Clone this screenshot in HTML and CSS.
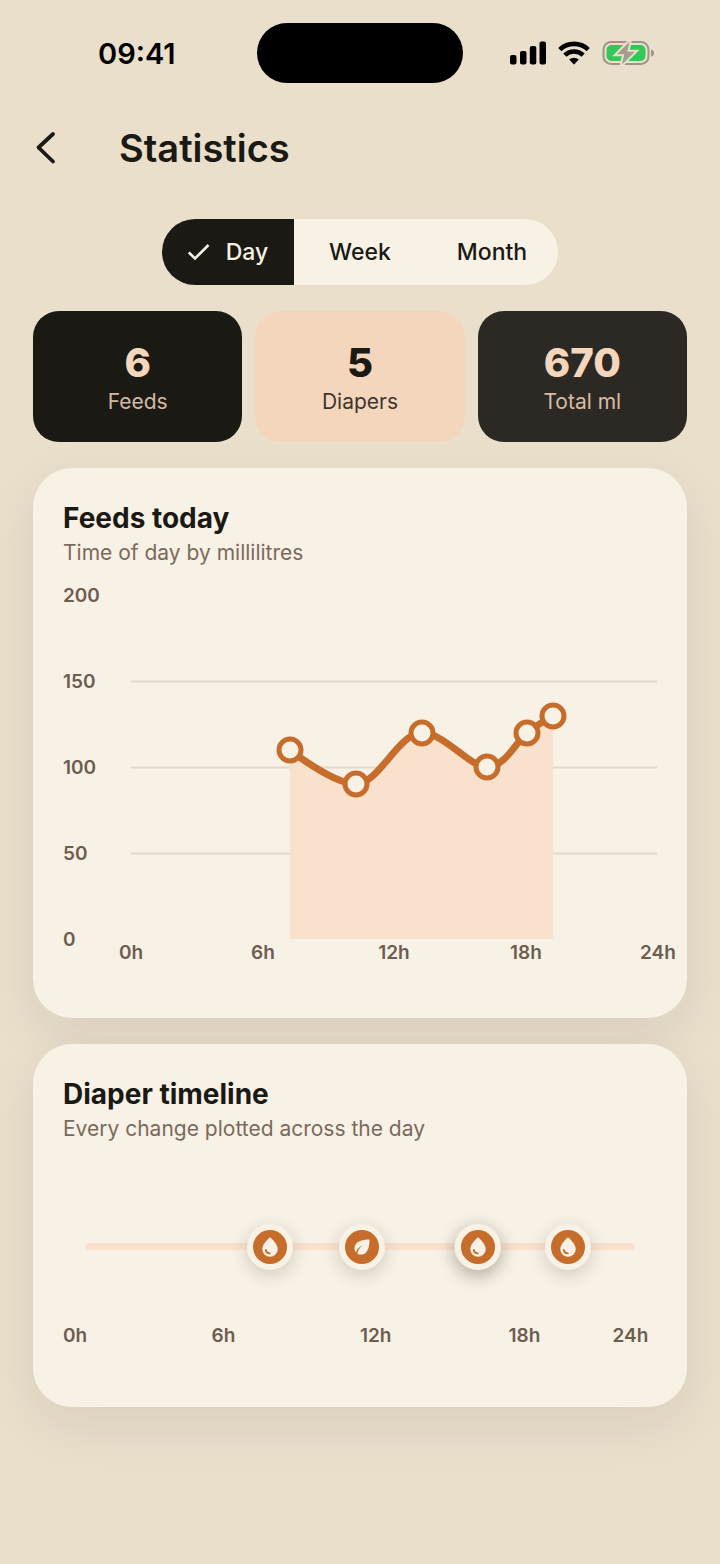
FILE: index.html
```html
<!DOCTYPE html>
<html lang="en">
<head>
  <meta charset="UTF-8">
  <meta name="viewport" content="width=device-width, initial-scale=1.0">
  <title>Statistics</title>

  <link rel="stylesheet" href="styles.css">
</head>
<body>

  <div class="status-bar">
    <time class="status-bar__time">09:41</time>
    <div class="status-bar__island"></div>
    <div class="status-bar__icons">
      <svg width="36" height="24" viewBox="0 0 36 24" aria-hidden="true">
        <rect x="0" y="14" width="6.500" height="9.500" rx="2"/>
        <rect x="10" y="10" width="6.500" height="13.500" rx="2"/>
        <rect x="19.800" y="5" width="6.500" height="18.500" rx="2"/>
        <rect x="29.500" y="0.500" width="6.500" height="23" rx="2"/>
      </svg>
      <svg width="32" height="24" viewBox="0 0 32 24" aria-hidden="true">
        <g fill="none" stroke="#000" stroke-width="4.600">
          <path d="M1.800 8.600A20.500 20.500 0 0 1 30.200 8.600"/>
          <path d="M6.800 14.200A13.400 13.400 0 0 1 25.200 14.200"/>
        </g>
        <path d="M11.200 18.600a7 7 0 0 1 9.600 0l-4.200 4.500q-.6.6-1.200 0z"/>
      </svg>
      <svg width="52" height="26" viewBox="0 0 52 26" aria-hidden="true">
        <rect x="1.500" y="2" width="45" height="22" rx="7.500" fill="none" stroke="#9d9587" stroke-width="2"/>
        <rect x="4.500" y="5" width="39" height="16" rx="5" fill="#34c759"/>
        <path d="M49 9.500q3 .8 3 3.500t-3 3.500z" fill="#9d9587"/>
        <path class="bolt" d="M27.500 1.500 15 14.200h7.200L20 24.500 32.800 11.800h-7.300z"/>
      </svg>
    </div>
  </div>

  <header class="header">
    <button type="button" class="header__back" aria-label="Back">
      <svg width="28" height="34" viewBox="0 0 28 34" aria-hidden="true">
        <path d="M20 3 5.500 16.500l14.500 14" fill="none" stroke="currentColor" stroke-width="3.800" stroke-linecap="round" stroke-linejoin="round"/>
      </svg>
    </button>
    <h1 class="header__title">Statistics</h1>
  </header>

  <main class="main">

    <form class="periods">
      <label for="period-day" class="periods__item">
        <input type="radio" id="period-day" name="period" value="day" checked>
        <svg class="periods__check" width="22" height="18" viewBox="0 0 22 18" aria-hidden="true">
          <path d="M.800 9.500 7 15.500 20.500 2" fill="none" stroke="currentColor" stroke-width="2.600"/>
        </svg>
        <span>Day</span>
      </label>
      <label for="period-week" class="periods__item">
        <input type="radio" id="period-week" name="period" value="week">
        <span>Week</span>
      </label>
      <label for="period-month" class="periods__item">
        <input type="radio" id="period-month" name="period" value="month">
        <span>Month</span>
      </label>
    </form>

    <section class="totals">
      <div class="total total_dark">
        <span class="total__value">6</span>
        <span class="total__name">Feeds</span>
      </div>
      <div class="total total_peach">
        <span class="total__value">5</span>
        <span class="total__name">Diapers</span>
      </div>
      <div class="total total_soft">
        <span class="total__value">670</span>
        <span class="total__name">Total ml</span>
      </div>
    </section>

    <section class="card">
      <h2 class="card__title">Feeds today</h2>
      <p class="card__text">Time of day by millilitres</p>

      <svg class="chart" viewBox="0 0 594 381" role="img" aria-label="Feeds today">
        <g class="chart__grid">
          <path d="M68 96.500H594M68 182.500H594M68 268.500H594"/>
        </g>
        <path class="chart__area" d="M227 165C227 165 270 199 293 199C316 199 335 148 359 148C382 148 406 182 424 182C442 182 453 157 464 148C475 139 490 131 490 131V354H227Z"/>
        <path class="chart__line" d="M227 165C227 165 270 199 293 199C316 199 335 148 359 148C382 148 406 182 424 182C442 182 453 157 464 148C475 139 490 131 490 131"/>
        <g class="chart__points">
          <circle cx="227" cy="165" r="11"/>
          <circle cx="293" cy="199" r="11"/>
          <circle cx="359" cy="148" r="11"/>
          <circle cx="424" cy="182" r="11"/>
          <circle cx="464" cy="148" r="11"/>
          <circle cx="490" cy="131" r="11"/>
        </g>
        <g class="chart__labels">
          <text x="0" y="17">200</text>
          <text x="0" y="103">150</text>
          <text x="0" y="189">100</text>
          <text x="0" y="275">50</text>
          <text x="0" y="361">0</text>
        </g>
        <g class="chart__labels chart__labels_hours">
          <text x="68" y="374">0h</text>
          <text x="200" y="374">6h</text>
          <text x="331" y="374">12h</text>
          <text x="463" y="374">18h</text>
          <text x="595" y="374">24h</text>
        </g>
      </svg>
    </section>

    <section class="card">
      <h2 class="card__title">Diaper timeline</h2>
      <p class="card__text">Every change plotted across the day</p>

      <svg class="sprite" aria-hidden="true">
        <symbol id="drop" viewBox="0 0 34 34">
          <path d="M17 7.300C14 10 9.300 14.500 9.300 19.200a7.700 7.500 0 0 0 15.400 0C24.700 14.500 20 10 17 7.300z" fill="#f8f1e5"/>
          <path d="M12.800 20q.6 3.200 4 3.400" fill="none" stroke="#c66d2c" stroke-width="1.800" stroke-linecap="round"/>
        </symbol>
        <symbol id="leaf" viewBox="0 0 34 34">
          <path d="M24.500 9.500C17 9.500 9.500 11.500 9.500 18.500c0 1.700.6 3 1.400 4 1-3.200 3.300-5.900 6.800-7.500-2.800 2.400-4.700 5.100-5.300 8.700 1 .6 2.300.9 3.700.9 7 0 8.400-8.600 8.400-15.100z" fill="#f8f1e5"/>
        </symbol>
      </svg>

      <div class="timeline">
        <div class="timeline__track">
          <span class="marker" style="left: 33.700%"><svg class="marker__icon"><use href="#drop"/></svg></span>
          <span class="marker" style="left: 50.300%"><svg class="marker__icon"><use href="#leaf"/></svg></span>
          <span class="marker" style="left: 71.300%"><svg class="marker__icon"><use href="#drop"/></svg></span>
          <span class="marker" style="left: 71.500%"><svg class="marker__icon"><use href="#drop"/></svg></span>
          <span class="marker" style="left: 87.900%"><svg class="marker__icon"><use href="#drop"/></svg></span>
        </div>
      </div>

      <div class="hours">
        <span>0h</span>
        <span>6h</span>
        <span>12h</span>
        <span>18h</span>
        <span>24h</span>
      </div>
    </section>

  </main>

</body>
</html>
```
FILE: styles.css
```css
*, *:after, *:before {
  box-sizing: border-box;
}

body {
  margin: 0;
  min-height: 100vh;
  background-color: #e9dfcb;
  color: #1a1914;
  font-family: Inter, "Liberation Sans", sans-serif;
}

.status-bar {
  display: grid;
  grid-template-columns: 1fr 206px 1fr;
  align-items: center;
  padding: 23px 66px;
  color: #000;
}

.status-bar__time {
  padding-left: 32px;
  font-size: 29px;
  font-weight: 600;
}

.status-bar__island {
  height: 60px;
  border-radius: 30px;
  background-color: #000;
}

.status-bar__icons {
  display: flex;
  align-items: center;
  justify-content: flex-end;
  gap: 12px;
}

.bolt {
  fill: #a59b8e;
  stroke: #e9dfcb;
  stroke-width: 4;
  paint-order: stroke;
}

.header {
  display: flex;
  align-items: center;
  gap: 58px;
  height: 84px;
  padding: 0 33px;
}

.header__back {
  display: flex;
  padding: 0;
  border: none;
  background: none;
  color: inherit;
  cursor: pointer;
}

.header__title {
  margin: 0;
  font-size: 38px;
  font-weight: 600;
  line-height: 44px;
}

.main {
  display: flex;
  flex-direction: column;
  gap: 26px;
  padding: 29px 33px 80px;
}

.periods {
  display: grid;
  grid-template-columns: repeat(3, 132px);
  align-self: center;
  overflow: hidden;
  border-radius: 33px;
  background-color: #f8f1e5;
}

.periods__item {
  display: flex;
  align-items: center;
  justify-content: center;
  gap: 16px;
  height: 66px;
  font-size: 23px;
  font-weight: 500;
  cursor: pointer;
}

.periods__item input {
  position: absolute;
  opacity: 0;
}

.periods__item:has(input:checked) {
  background-color: #1a1914;
  color: #f8f1e5;
}

.totals {
  display: grid;
  grid-template-columns: repeat(3, 1fr);
  gap: 13px;
}

.total {
  display: flex;
  flex-direction: column;
  align-items: center;
  padding: 27px 10px 26px;
  border-radius: 26px;
}

.total_dark {
  background-color: #1a1914;
  color: #f4d6bc;
}

.total_peach {
  background-color: #f4d6bc;
  color: #1a1914;
}

.total_soft {
  background-color: #2c2924;
  color: #f4d6bc;
}

.total__value {
  font-size: 40px;
  font-weight: 800;
  line-height: 50px;
}

.total__name {
  font-size: 21px;
  line-height: 28px;
  opacity: 0.85;
}

.card {
  padding: 34px 30px 52px;
  border-radius: 39px;
  background-color: #f8f1e5;
  box-shadow: 0 18px 52px rgba(26, 25, 20, 0.08);
}

.card__title {
  margin: 0 0 5px;
  font-size: 28px;
  font-weight: 700;
  line-height: 32px;
}

.card__text {
  margin: 0;
  color: #7a6a5d;
  font-size: 21px;
  line-height: 28px;
}

.chart {
  display: block;
  width: 100%;
  margin-top: 18px;
  overflow: visible;
}

.chart__grid {
  fill: none;
  stroke: #e2d9cb;
  stroke-width: 2;
}

.chart__area {
  fill: #fae1cd;
}

.chart__line {
  fill: none;
  stroke: #c66d2c;
  stroke-width: 7;
}

.chart__points {
  fill: #f8f1e5;
  stroke: #c66d2c;
  stroke-width: 5;
}

.chart__labels {
  fill: #6d5c50;
  font-size: 19px;
  font-weight: 600;
}

.chart__labels_hours {
  text-anchor: middle;
}

.sprite {
  display: none;
}

.timeline {
  margin-top: 80px;
  padding: 20px 22px 19px;
}

.timeline__track {
  position: relative;
  height: 7px;
  border-radius: 4px;
  background-color: #fae1cd;
}

/* markers sit on the track by time of day */
.marker {
  position: absolute;
  top: 50%;
  width: 46px;
  height: 46px;
  border: 6px solid #f8f1e5;
  border-radius: 50%;
  background-color: #c66d2c;
  box-shadow: 0 5px 18px rgba(26, 25, 20, 0.18);
  transform: translate(-50%, -50%);
}

.marker__icon {
  display: block;
  width: 34px;
  height: 34px;
}

.hours {
  display: grid;
  grid-template-columns: 10fr 10fr 10fr 7fr 3fr;
  margin: 55px 0 7px;
  color: #6d5c50;
  font-size: 19px;
  font-weight: 600;
  line-height: 24px;
}
```
